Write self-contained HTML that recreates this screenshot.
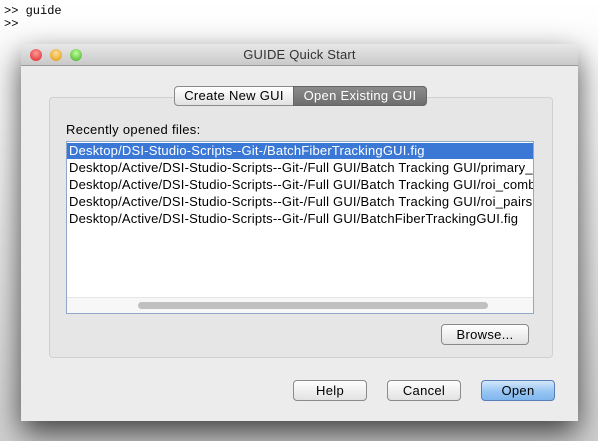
<!DOCTYPE html><html><head><style>
*{margin:0;padding:0;box-sizing:border-box}
body{width:598px;height:441px;overflow:hidden;position:relative;background:linear-gradient(#fff 0,#f4f4f4 120px,#d0d0d0 441px);font-family:"Liberation Sans",sans-serif;font-size:12.5px;color:#000}
.a{position:absolute}
.term{left:4px;top:5px;font-family:"Liberation Mono",monospace;font-size:12px;line-height:13px}
.dlg{left:21px;top:44px;width:557px;height:377px;background:#ececec;box-shadow:0 12px 30px rgba(0,0,0,.7);border-radius:5px 5px 0 0}
.tb{left:0;top:0;width:557px;height:22px;background:linear-gradient(#e8e8e8,#c9c9c9);border-bottom:1px solid #999;border-radius:5px 5px 0 0;text-align:center;line-height:22px;font-size:13px;color:#333;letter-spacing:.2px}
.dot{top:5px;width:12px;height:12px;border-radius:50%}
.panel{left:28px;top:53px;width:504px;height:261px;border:1px solid #d0d0d0;border-radius:4px;background:#e6e6e6}
.btn{height:21px;border:1px solid #8a8a8a;border-radius:4px;background:linear-gradient(#fff,#f0f0f0 50%,#e2e2e2);text-align:center;line-height:19px;font-size:13px;letter-spacing:.3px}
.list{left:45px;top:97px;width:468px;height:173px;border:1px solid #8fa8c8;background:#fff;overflow:hidden}
.row{position:absolute;left:2px;white-space:nowrap;height:16px;line-height:16px;font-size:13px;letter-spacing:.2px}
</style></head><body>
<div class="a term">&gt;&gt; guide<br>&gt;&gt;</div>
<div class="a dlg">
<div class="a tb">GUIDE Quick Start</div>
<div class="a dot" style="left:9px;background:radial-gradient(circle at 50% 35%,#f99,#d22)"></div>
<div class="a dot" style="left:29px;background:radial-gradient(circle at 50% 35%,#fd9,#d90)"></div>
<div class="a dot" style="left:49px;background:radial-gradient(circle at 50% 35%,#bf9,#4a2)"></div>
<div class="a panel"></div>
<div class="a btn" style="left:153px;top:42px;width:120px;height:20px;border-radius:4px 0 0 4px;line-height:18px">Create New GUI</div>
<div class="a btn" style="left:272px;top:42px;width:134px;height:20px;border-radius:0 4px 4px 0;background:linear-gradient(#8a8a8a,#6e6e6e);color:#fff;border-color:#666;line-height:18px">Open Existing GUI</div>
<div class="a" style="left:45px;top:78px;font-size:13px;letter-spacing:.3px">Recently opened files:</div>
<div class="a list">
<div class="row" style="top:1px;left:0;width:466px;background:#3b78d6;color:#fff;padding-left:2px">Desktop/DSI-Studio-Scripts--Git-/BatchFiberTrackingGUI.fig</div>
<div class="row" style="top:18px">Desktop/Active/DSI-Studio-Scripts--Git-/Full GUI/Batch Tracking GUI/primary_roi.fig</div>
<div class="row" style="top:35px">Desktop/Active/DSI-Studio-Scripts--Git-/Full GUI/Batch Tracking GUI/roi_combination.fig</div>
<div class="row" style="top:52px">Desktop/Active/DSI-Studio-Scripts--Git-/Full GUI/Batch Tracking GUI/roi_pairs.fig</div>
<div class="row" style="top:69px">Desktop/Active/DSI-Studio-Scripts--Git-/Full GUI/BatchFiberTrackingGUI.fig</div>
<div class="a" style="left:0;top:155px;width:466px;height:16px;background:#f7f7f7;border-top:1px solid #e6e6e6"></div>
<div class="a" style="left:71px;top:160px;width:350px;height:7px;border-radius:4px;background:#c0c0c0"></div>
</div>
<div class="a btn" style="left:420px;top:280px;width:88px">Browse...</div>
<div class="a btn" style="left:272px;top:336px;width:74px">Help</div>
<div class="a btn" style="left:366px;top:336px;width:74px">Cancel</div>
<div class="a btn" style="left:460px;top:336px;width:74px;border-color:#5a7fb8;background:linear-gradient(#d4e8fb,#9cc8f3 50%,#7fb6ee)">Open</div>
</div>
</body></html>
